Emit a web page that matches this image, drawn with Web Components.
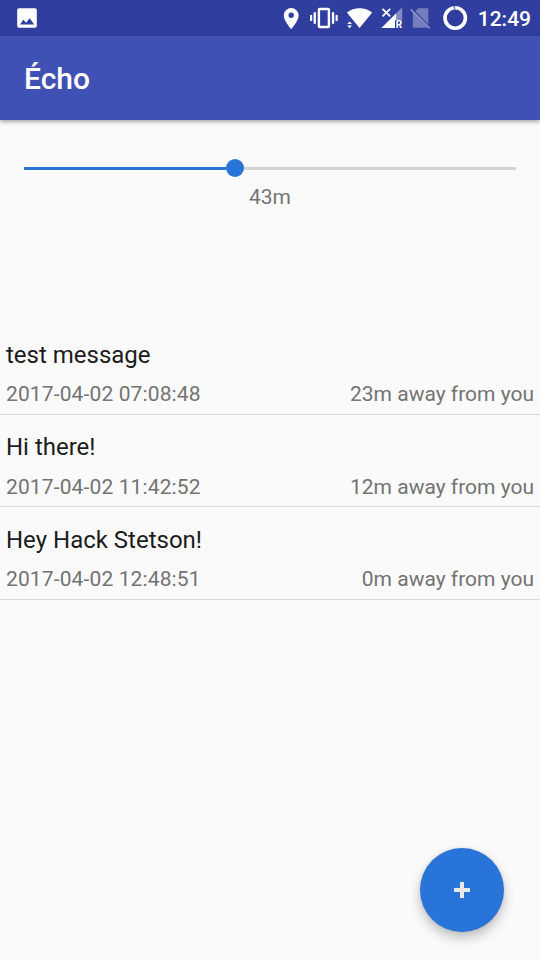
<!DOCTYPE html>
<html lang="en">
<head>
<meta charset="utf-8">
<meta name="viewport" content="width=device-width, initial-scale=1">
<title>Écho</title>
<style>
:root {
    --primary-color: #3f51b5;
    --primary-dark-color: #303f9f;
    --accent-color: #2874d9;
    --background-color: #fafafa;
    --text-color: #1c1c1c;
    --text-color-secondary: #737373;
}

body {
    margin: 0;
    font-family: Roboto, "Liberation Sans", sans-serif;
    background: var(--background-color);
}
</style>
</head>
<body>
<echo-app></echo-app>

<script>
function attachTemplate(element, html) {
    const template = document.createElement('template');
    template.innerHTML = html;
    element.attachShadow({ mode: 'open' });
    element.shadowRoot.appendChild(template.content.cloneNode(true));
}

class StatusBar extends HTMLElement {
    constructor() {
        super();

        attachTemplate(this, `
<style>
:host {
    display: flex;
    position: relative;
    z-index: 2;
    height: 36px;
    box-sizing: border-box;
    padding: 0 9px 0 12px;
    background: var(--primary-dark-color);
    color: #fff;
}

svg {
    display: block;
    flex: none;
    fill: currentColor;
}

.icons {
    display: flex;
    margin-left: auto;
}

.time {
    font-size: 21px;
    font-weight: 500;
    line-height: 38px;
}

.r {
    font: 700 10px Roboto, sans-serif;
}
</style>

<svg width="30" height="36"><path fill-rule="evenodd" d="M7 8.2H23Q24.8 8.2 24.8 10V26Q24.8 27.7 23 27.7H7Q5.2 27.7 5.2 26V10Q5.2 8.2 7 8.2ZM8 24.6H22.3L17.6 18.2L14.2 22.8L11.3 19.8Z"/></svg>

<div class="icons">
    <svg width="26" height="36"><path fill-rule="evenodd" d="M11.2 8A7.4 7.4 0 0 0 3.8 15.4C3.8 20.8 11.2 29 11.2 29S18.6 20.8 18.6 15.4A7.4 7.4 0 0 0 11.2 8ZM11.2 12.6A2.7 2.7 0 1 1 11.2 18A2.7 2.7 0 1 1 11.2 12.6Z"/></svg>
    <svg width="36" height="36">
        <rect x="12.9" y="9" width="10" height="18" rx=".8" fill="none" stroke="currentColor" stroke-width="2.4"/>
        <path d="M4.1 14.9H6.2V21H4.1ZM7.6 12.3H9.9V23.8H7.6ZM25.9 12.3H28.2V23.8H25.9ZM29.6 14.9H31.7V21H29.6Z"/>
    </svg>
    <svg width="36" height="36"><path d="M17.5 28.1L4.9 12.6C11.8 6.9 23.2 6.9 30.2 12.6ZM5.2 24.1L7.6 21.5L10 24.1ZM5.2 25.6H10L7.6 28.2Z"/></svg>
    <svg width="28" height="36">
        <path opacity=".4" d="M24.2 7.3V20H18.2V13.3Z"/>
        <path d="M18.2 13.3V20H17V28.1H3.3Z"/>
        <path fill="none" stroke="currentColor" stroke-width="1.8" d="M4.5 8.8L12.2 16.3M12.2 8.8L4.5 16.3"/>
        <text class="r" x="17.8" y="28.2">R</text>
    </svg>
    <svg width="30" height="36">
        <path opacity=".33" d="M12.2 8.2H21.3Q22.3 8.2 22.3 9.2V24.4L9.4 11.2ZM7 12.6L21.6 27.7H8Q6.8 27.7 6.8 26.5Z"/>
        <path opacity=".42" fill="none" stroke="currentColor" stroke-width="1.8" d="M4.7 9.3L23.5 28.2"/>
    </svg>
    <svg width="41.5" height="36">
        <circle cx="19.2" cy="18" r="10.2" fill="none" stroke="currentColor" stroke-width="3.6"/>
        <path fill="#8990c8" d="M17 6L19.3 6V10H18Z"/>
    </svg>
    <span class="time">12:49</span>
</div>
`);
    }
}

class AppToolbar extends HTMLElement {
    constructor() {
        super();

        attachTemplate(this, `
<style>
:host {
    display: flex;
    position: relative;
    align-items: center;
    height: 84px;
    box-sizing: border-box;
    padding: 2px 24px 0;
    background: var(--primary-color);
    box-shadow: 0 1px 5px rgba(0, 0, 0, .45);
    color: #fff;
}

h1 {
    margin: 0;
    font-size: 30px;
    font-weight: 500;
    line-height: 36px;
}
</style>

<h1><slot></slot></h1>
`);
    }
}

class RadiusSlider extends HTMLElement {
    constructor() {
        super();

        attachTemplate(this, `
<style>
:host {
    display: block;
    height: 202px;
    box-sizing: border-box;
    padding: 39px 24px 0;
    color: var(--text-color-secondary);
    text-align: center;
}

.track {
    display: flex;
    align-items: center;
    height: 18px;
}

.fill {
    width: 202.4px;
    height: 3px;
    background: var(--accent-color);
}

.thumb {
    width: 18px;
    height: 18px;
    border-radius: 50%;
    background: var(--accent-color);
}

.rest {
    flex: 1;
    height: 3px;
    background: #d4d4d4;
}

.label {
    margin-top: 8px;
    font-size: 21px;
    line-height: 25px;
}
</style>

<div class="track">
    <div class="fill"></div>
    <div class="thumb"></div>
    <div class="rest"></div>
</div>
<div class="label"><slot></slot></div>
`);
    }
}

class MessageItem extends HTMLElement {
    constructor() {
        super();

        attachTemplate(this, `
<style>
:host {
    display: block;
    height: 92.5px;
    box-sizing: border-box;
    padding: 18.6px 6px 0;
    border-bottom: 1.5px solid #dadada;
}

.text {
    color: var(--text-color);
    font-size: 24px;
    line-height: 28px;
}

.meta {
    display: flex;
    justify-content: space-between;
    margin-top: 13.6px;
    color: var(--text-color-secondary);
    font-size: 21px;
    line-height: 25px;
}

slot[name="date"] {
    letter-spacing: .13px;
}
</style>

<div class="text"><slot></slot></div>
<div class="meta">
    <slot name="date"></slot>
    <slot name="distance"></slot>
</div>
`);
    }
}

class AddButton extends HTMLElement {
    constructor() {
        super();

        attachTemplate(this, `
<style>
:host {
    display: flex;
    align-items: center;
    justify-content: center;
    width: 84px;
    height: 84px;
    border-radius: 50%;
    background: var(--accent-color);
    box-shadow: 0 6px 12px rgba(0, 0, 0, .24), 0 0 3px rgba(0, 0, 0, .12);
}
</style>

<svg width="16" height="16"><path fill="#e8e8e8" d="M6 0H10V6H16V10H10V16H6V10H0V6H6Z"/></svg>
`);
    }
}

class EchoApp extends HTMLElement {
    constructor() {
        super();

        attachTemplate(this, `
<style>
:host {
    display: flex;
    flex-direction: column;
    height: 960px;
    overflow: hidden;
}

add-button {
    align-self: flex-end;
    margin: auto 36px 28.5px 0;
}
</style>

<status-bar></status-bar>
<app-toolbar>Écho</app-toolbar>
<radius-slider>43m</radius-slider>
<message-item>test message<span slot="date">2017-04-02 07:08:48</span><span slot="distance">23m away from you</span></message-item>
<message-item>Hi there!<span slot="date">2017-04-02 11:42:52</span><span slot="distance">12m away from you</span></message-item>
<message-item>Hey Hack Stetson!<span slot="date">2017-04-02 12:48:51</span><span slot="distance">0m away from you</span></message-item>
<add-button></add-button>
`);
    }
}

customElements.define('status-bar', StatusBar);
customElements.define('app-toolbar', AppToolbar);
customElements.define('radius-slider', RadiusSlider);
customElements.define('message-item', MessageItem);
customElements.define('add-button', AddButton);
customElements.define('echo-app', EchoApp);
</script>
</body>
</html>
